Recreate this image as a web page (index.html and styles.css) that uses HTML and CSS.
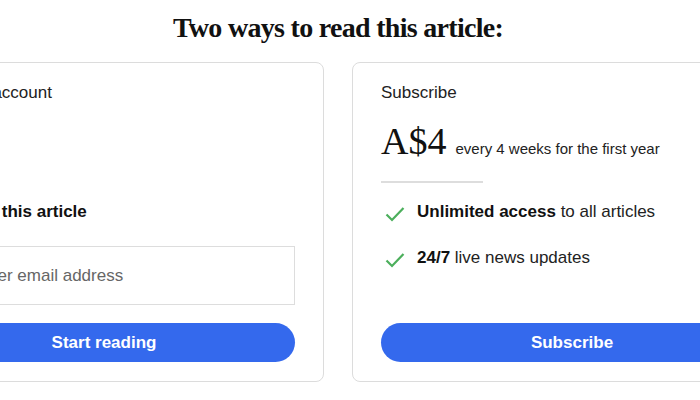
FILE: index.html
```html
<!DOCTYPE html>
<html lang="en">
<head>
  <meta charset="UTF-8">
  <title>Two ways to read this article</title>
  <link rel="stylesheet" href="styles.css">
</head>
<body>

  <div class="offer-page">
    <h1 class="offer-title">Two ways to read this article:</h1>

    <div class="offer-row">
      <div class="offer-card">
        <p class="card-label">Create an account</p>
        <div class="card-spacer"></div>
        <p class="card-heading">Sign in for this article</p>
        <input class="email-input" type="email" placeholder="Enter email address">
        <button class="card-button">Start reading</button>
      </div>

      <div class="offer-card">
        <p class="card-label">Subscribe</p>
        <div class="price">
          <span class="price-amount">A$4</span>
          <span class="price-term">every 4 weeks for the first year</span>
        </div>
        <div class="price-rule"></div>
        <ul class="perks">
          <li>
            <svg class="check" viewBox="0 0 20 16" width="20" height="16"><path d="M1.5 8.5 L7 14 L18.5 2" fill="none" stroke="#4caf5c" stroke-width="2.2"/></svg>
            <span><b>Unlimited access</b> to all articles</span>
          </li>
          <li>
            <svg class="check" viewBox="0 0 20 16" width="20" height="16"><path d="M1.5 8.5 L7 14 L18.5 2" fill="none" stroke="#4caf5c" stroke-width="2.2"/></svg>
            <span><b>24/7</b> live news updates</span>
          </li>
        </ul>
        <button class="card-button">Subscribe</button>
      </div>
    </div>
  </div>

</body>
</html>
```

FILE: styles.css
```css
* { margin: 0; padding: 0; box-sizing: border-box; }
body {
  background-color: #ffffff;
  font-family: "Liberation Sans", Arial, sans-serif;
  color: #111;
  overflow: hidden;
}
.offer-page {
  width: 908px;
  margin-left: -116px;
}
.offer-title {
  font-family: "Liberation Serif", "Times New Roman", serif;
  font-weight: bold;
  font-size: 28px;
  letter-spacing: -0.7px;
  text-align: center;
  line-height: 1;
  padding-top: 14px;
  height: 62px;
  color: #111;
}
.offer-row {
  display: flex;
  gap: 28px;
}
.offer-card {
  width: 440px;
  height: 320px;
  border: 1px solid #dcdcdc;
  border-radius: 8px;
  padding: 20px 28px 19px;
  display: flex;
  flex-direction: column;
}
.card-label {
  font-size: 17px;
  line-height: 20px;
  color: #222;
}
.card-spacer {
  flex: 1;
}
.card-heading {
  font-size: 17px;
  font-weight: bold;
  line-height: 20px;
  margin-bottom: 24px;
}
.email-input {
  height: 59px;
  border: 1px solid #ddd;
  padding: 0 16px 0 58px;
  font-family: inherit;
  font-size: 17px;
  color: #111;
  margin-bottom: 18px;
}
.email-input::placeholder {
  color: #666;
}
.card-button {
  height: 39px;
  border: none;
  border-radius: 20px;
  background-color: #3469ed;
  color: white;
  font-family: inherit;
  font-size: 17px;
  font-weight: bold;
  cursor: pointer;
}
.price {
  display: flex;
  align-items: baseline;
  gap: 9px;
  margin-top: 18px;
}
.price-amount {
  font-family: "Liberation Serif", "Times New Roman", serif;
  font-size: 38px;
  line-height: 40px;
  color: #111;
}
.price-term {
  font-size: 15px;
  color: #222;
}
.price-rule {
  width: 102px;
  height: 2px;
  background-color: #ddd;
  margin-top: 20px;
}
.perks {
  list-style: none;
  margin-top: 19px;
  flex: 1;
}
.perks li {
  display: flex;
  align-items: center;
  gap: 12px;
  font-size: 17px;
  line-height: 20px;
  color: #222;
  margin-bottom: 26px;
}
.perks b {
  color: #111;
}
.check {
  margin-left: 4px;
  margin-top: 3px;
}
```
